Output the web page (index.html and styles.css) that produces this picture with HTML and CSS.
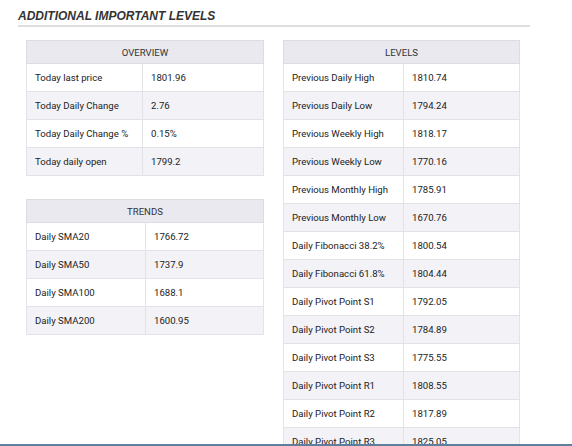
FILE: index.html
```html
<!DOCTYPE html>
<html>
<head>
<meta charset="utf-8">
<link rel="stylesheet" href="styles.css">
</head>
<body>
<div class="page">
  <h2 class="title">ADDITIONAL IMPORTANT LEVELS</h2>
  <div class="cols">
    <div class="col col-left">
      <table class="tbl">
        <colgroup><col class="c-overview"><col></colgroup>
        <thead><tr><th colspan="2">OVERVIEW</th></tr></thead>
        <tbody>
          <tr><td>Today last price</td><td>1801.96</td></tr>
          <tr><td>Today Daily Change</td><td>2.76</td></tr>
          <tr><td>Today Daily Change %</td><td>0.15%</td></tr>
          <tr><td>Today daily open</td><td>1799.2</td></tr>
        </tbody>
      </table>
      <table class="tbl tbl-trends">
        <colgroup><col class="c-trends"><col></colgroup>
        <thead><tr><th colspan="2">TRENDS</th></tr></thead>
        <tbody>
          <tr><td>Daily SMA20</td><td>1766.72</td></tr>
          <tr><td>Daily SMA50</td><td>1737.9</td></tr>
          <tr><td>Daily SMA100</td><td>1688.1</td></tr>
          <tr><td>Daily SMA200</td><td>1600.95</td></tr>
        </tbody>
      </table>
    </div>
    <div class="col col-right">
      <table class="tbl tbl-levels">
        <colgroup><col class="c-levels"><col></colgroup>
        <thead><tr><th colspan="2">LEVELS</th></tr></thead>
        <tbody>
          <tr><td>Previous Daily High</td><td>1810.74</td></tr>
          <tr><td>Previous Daily Low</td><td>1794.24</td></tr>
          <tr><td>Previous Weekly High</td><td>1818.17</td></tr>
          <tr><td>Previous Weekly Low</td><td>1770.16</td></tr>
          <tr><td>Previous Monthly High</td><td>1785.91</td></tr>
          <tr><td>Previous Monthly Low</td><td>1670.76</td></tr>
          <tr><td>Daily Fibonacci 38.2%</td><td>1800.54</td></tr>
          <tr><td>Daily Fibonacci 61.8%</td><td>1804.44</td></tr>
          <tr><td>Daily Pivot Point S1</td><td>1792.05</td></tr>
          <tr><td>Daily Pivot Point S2</td><td>1784.89</td></tr>
          <tr><td>Daily Pivot Point S3</td><td>1775.55</td></tr>
          <tr><td>Daily Pivot Point R1</td><td>1808.55</td></tr>
          <tr><td>Daily Pivot Point R2</td><td>1817.89</td></tr>
          <tr><td>Daily Pivot Point R3</td><td>1825.05</td></tr>
        </tbody>
      </table>
    </div>
  </div>
</div>
</body>
</html>
```

FILE: styles.css
```css
html, body {
  margin: 0;
  padding: 0;
  background: #fff;
}

.page {
  box-sizing: border-box;
  height: 446px;
  overflow: hidden;
  border-bottom: 2px solid #5f7e9c;
  padding: 0 42px 0 18px;
  font-family: Roboto, "Liberation Sans", Arial, sans-serif;
}

.title {
  margin: 0;
  padding-top: 9px;
  padding-bottom: 2px;
  font-family: "Liberation Sans", Arial, sans-serif;
  font-size: 12px;
  line-height: 14px;
  font-weight: bold;
  font-style: italic;
  color: #333;
  border-bottom: 2px solid #dedede;
}

.cols {
  display: flex;
  gap: 19px;
  padding: 13px 0 0 8px;
}

.col-left {
  width: 238px;
  display: flex;
  flex-direction: column;
  gap: 23px;
}

.col-right {
  width: 237px;
}

.tbl {
  width: 100%;
  border-collapse: collapse;
  table-layout: fixed;
  font-size: 9.6px;
  color: #222;
}

.c-overview { width: 116px; }
.c-trends { width: 119px; }
.c-levels { width: 120px; }

.tbl th {
  height: 22px;
  padding: 0;
  background: #e9e9ef;
  border: 1px solid #dcdce2;
  font-weight: normal;
  color: #333;
  text-align: center;
}

.tbl td {
  height: 27px;
  padding: 0 8px;
  border: 1px solid #e2e2e8;
  white-space: nowrap;
}

.tbl tbody tr:nth-child(even) td {
  background: #f3f2f7;
}
```
